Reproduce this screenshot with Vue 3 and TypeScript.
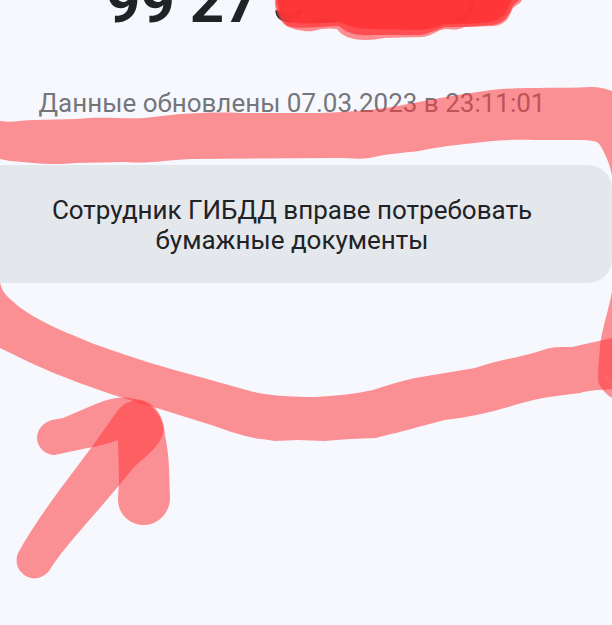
<script setup lang="ts">
const documentNumber: string = '99 27 3'
const updatedAt: string = 'Данные обновлены 07.03.2023 в 23:11:01'
const notice: string = 'Сотрудник ГИБДД вправе потребовать бумажные документы'
</script>

<template>
  <main class="screen">
    <div class="content">
      <h1 class="number">{{ documentNumber }}</h1>
      <p class="updated">{{ updatedAt }}</p>
      <section class="notice">
        <p class="notice-text">{{ notice }}</p>
      </section>
    </div>

    <svg class="marks" viewBox="0 0 612 625" width="612" height="625" aria-hidden="true">
      <!-- Cover over the rest of the number -->
      <g class="cover">
        <path class="cover-edge" d="M275 0C274 8 278 19 285 25C293 30 305 32 313 31C322 28 331 28 337 29C342 36 351 40 365 40C372 40 378 39 384 38L423 37C433 36 437 29 448 29C454 30 459 30 464 27L495 26C508 23 509 16 512 10C514 5 520 5 522 0Z" />
        <path class="cover-mid" d="M276 0C276 9 280 19 287 26C300 30 322 26 339 26C348 34 358 36 372 35L420 35C432 33 437 29 446 27L466 27L493 25C507 22 509 14 513 6L519 0Z" />
        <path class="cover-fill" d="M278 0C278 10 283 18 292 22C304 25 322 23 339 22C350 27 356 28 370 29L420 30C432 29 437 26 446 24L466 24L490 22C502 20 506 13 509 6L512 0Z" />
        <path class="cover-trace" d="M282 12C285 19 296 18 301 10M456 18C465 22 472 13 472 2M311 20H336" />
      </g>

      <!-- Loop round the notice -->
      <path class="marker" d="M0 121C12 123 22 120 35 120L76 119C102 116 120 119 144 118C156 117 168 115 180 114C200 113 218 112 240 113L320 113C355 112 386 109 413 103C435 99 455 95 478 92C510 86 550 89 590 87C600 87 606 89 612 91V176C610 163 604 152 600 145C597 140 590 141 585 140L535 140C510 139 489 141 465 144C447 146 432 148 419 151C402 153 387 154 374 157C365 160 350 158 335 158L190 159C165 160 151 164 125 162L75 163C52 166 25 162 10 161L0 159Z" />
      <path class="marker" d="M0 282C2 293 7 296 18 306C40 323 68 333 94 344C133 358 166 368 200 377L250 391C270 396 293 397 315 397C335 396 354 394 373 390C388 385 401 381 415 378C435 375 455 371 475 368C496 361 520 357 540 351C552 346 562 347 572 347C585 344 599 341 612 338V389C600 390 590 390 580 393C557 396 542 397 518 404C494 412 470 417 445 420L418 427C402 432 390 434 376 438L350 439L324 441L298 440L275 441C264 439 256 439 250 437C232 433 221 428 208 424L160 409C117 397 65 379 31 363L0 348Z" />
      <path class="marker" d="M612 291C609 310 602 327 600 347C599 360 597 379 599 384C602 390 607 395 612 398Z" />
      <path class="marker-glint" d="M604 374Q607 381 612 384" />

      <!-- Arrow -->
      <path class="marker" d="M18 553C30 531 45 510 61 488L94 444L118 410C125 402 134 398 145 403C158 409 165 423 163 434C159 446 150 453 134 467C118 487 101 507 85 525C72 540 59 555 49 571C41 580 30 581 22 573C17 569 15 561 18 553Z" />
      <path class="marker" d="M52 420L63 418L91 406C106 400 118 395 135 399C156 400 164 418 165 435C170 459 169 477 170 498C170 513 158 525 144 525C129 525 118 514 118 499L119 480L118 440C103 446 87 448 73 451L55 455C45 455 37 447 37 438C37 429 44 422 52 420Z" />
    </svg>
  </main>
</template>

<style>
body {
  background: #f7f8fd;
}
</style>

<style scoped>
.screen {
  position: relative;
  min-height: 100vh;
  overflow: hidden;
  background: #f7f8fd;
  font-family: Roboto, "Noto Sans", sans-serif;
  color: #202226;
}

/* The sheet runs past the left side of the viewport */
.content {
  margin-left: -28px;
}

.number {
  margin: -32px 0 0;
  padding-left: 134px;
  font-size: 60px;
  line-height: 68px;
  font-weight: 700;
}

.updated {
  margin: 52px 0 0;
  font-size: 26px;
  line-height: 30px;
  text-align: center;
  color: #74767b;
}

.notice {
  margin-top: 47px;
  padding: 30px 72px 28px;
  border-radius: 24px;
  background: #e4e8ec;
}

.notice-text {
  margin: 0;
  font-size: 26px;
  line-height: 30px;
  text-align: center;
}

.marks {
  position: absolute;
  top: 0;
  left: 0;
}

.marker {
  fill: #ff3337;
  fill-opacity: 0.53;
}

.marker-glint {
  fill: none;
  stroke: #ff7476;
  stroke-width: 1;
}

.cover-edge {
  fill: #ff4648;
  fill-opacity: 0.6;
}

.cover-mid {
  fill: #ff3a3c;
  fill-opacity: 0.75;
}

.cover-fill {
  fill: #ff3637;
}

.cover-trace {
  fill: none;
  stroke: #ee3033;
  stroke-width: 5;
  stroke-opacity: 0.45;
}
</style>
